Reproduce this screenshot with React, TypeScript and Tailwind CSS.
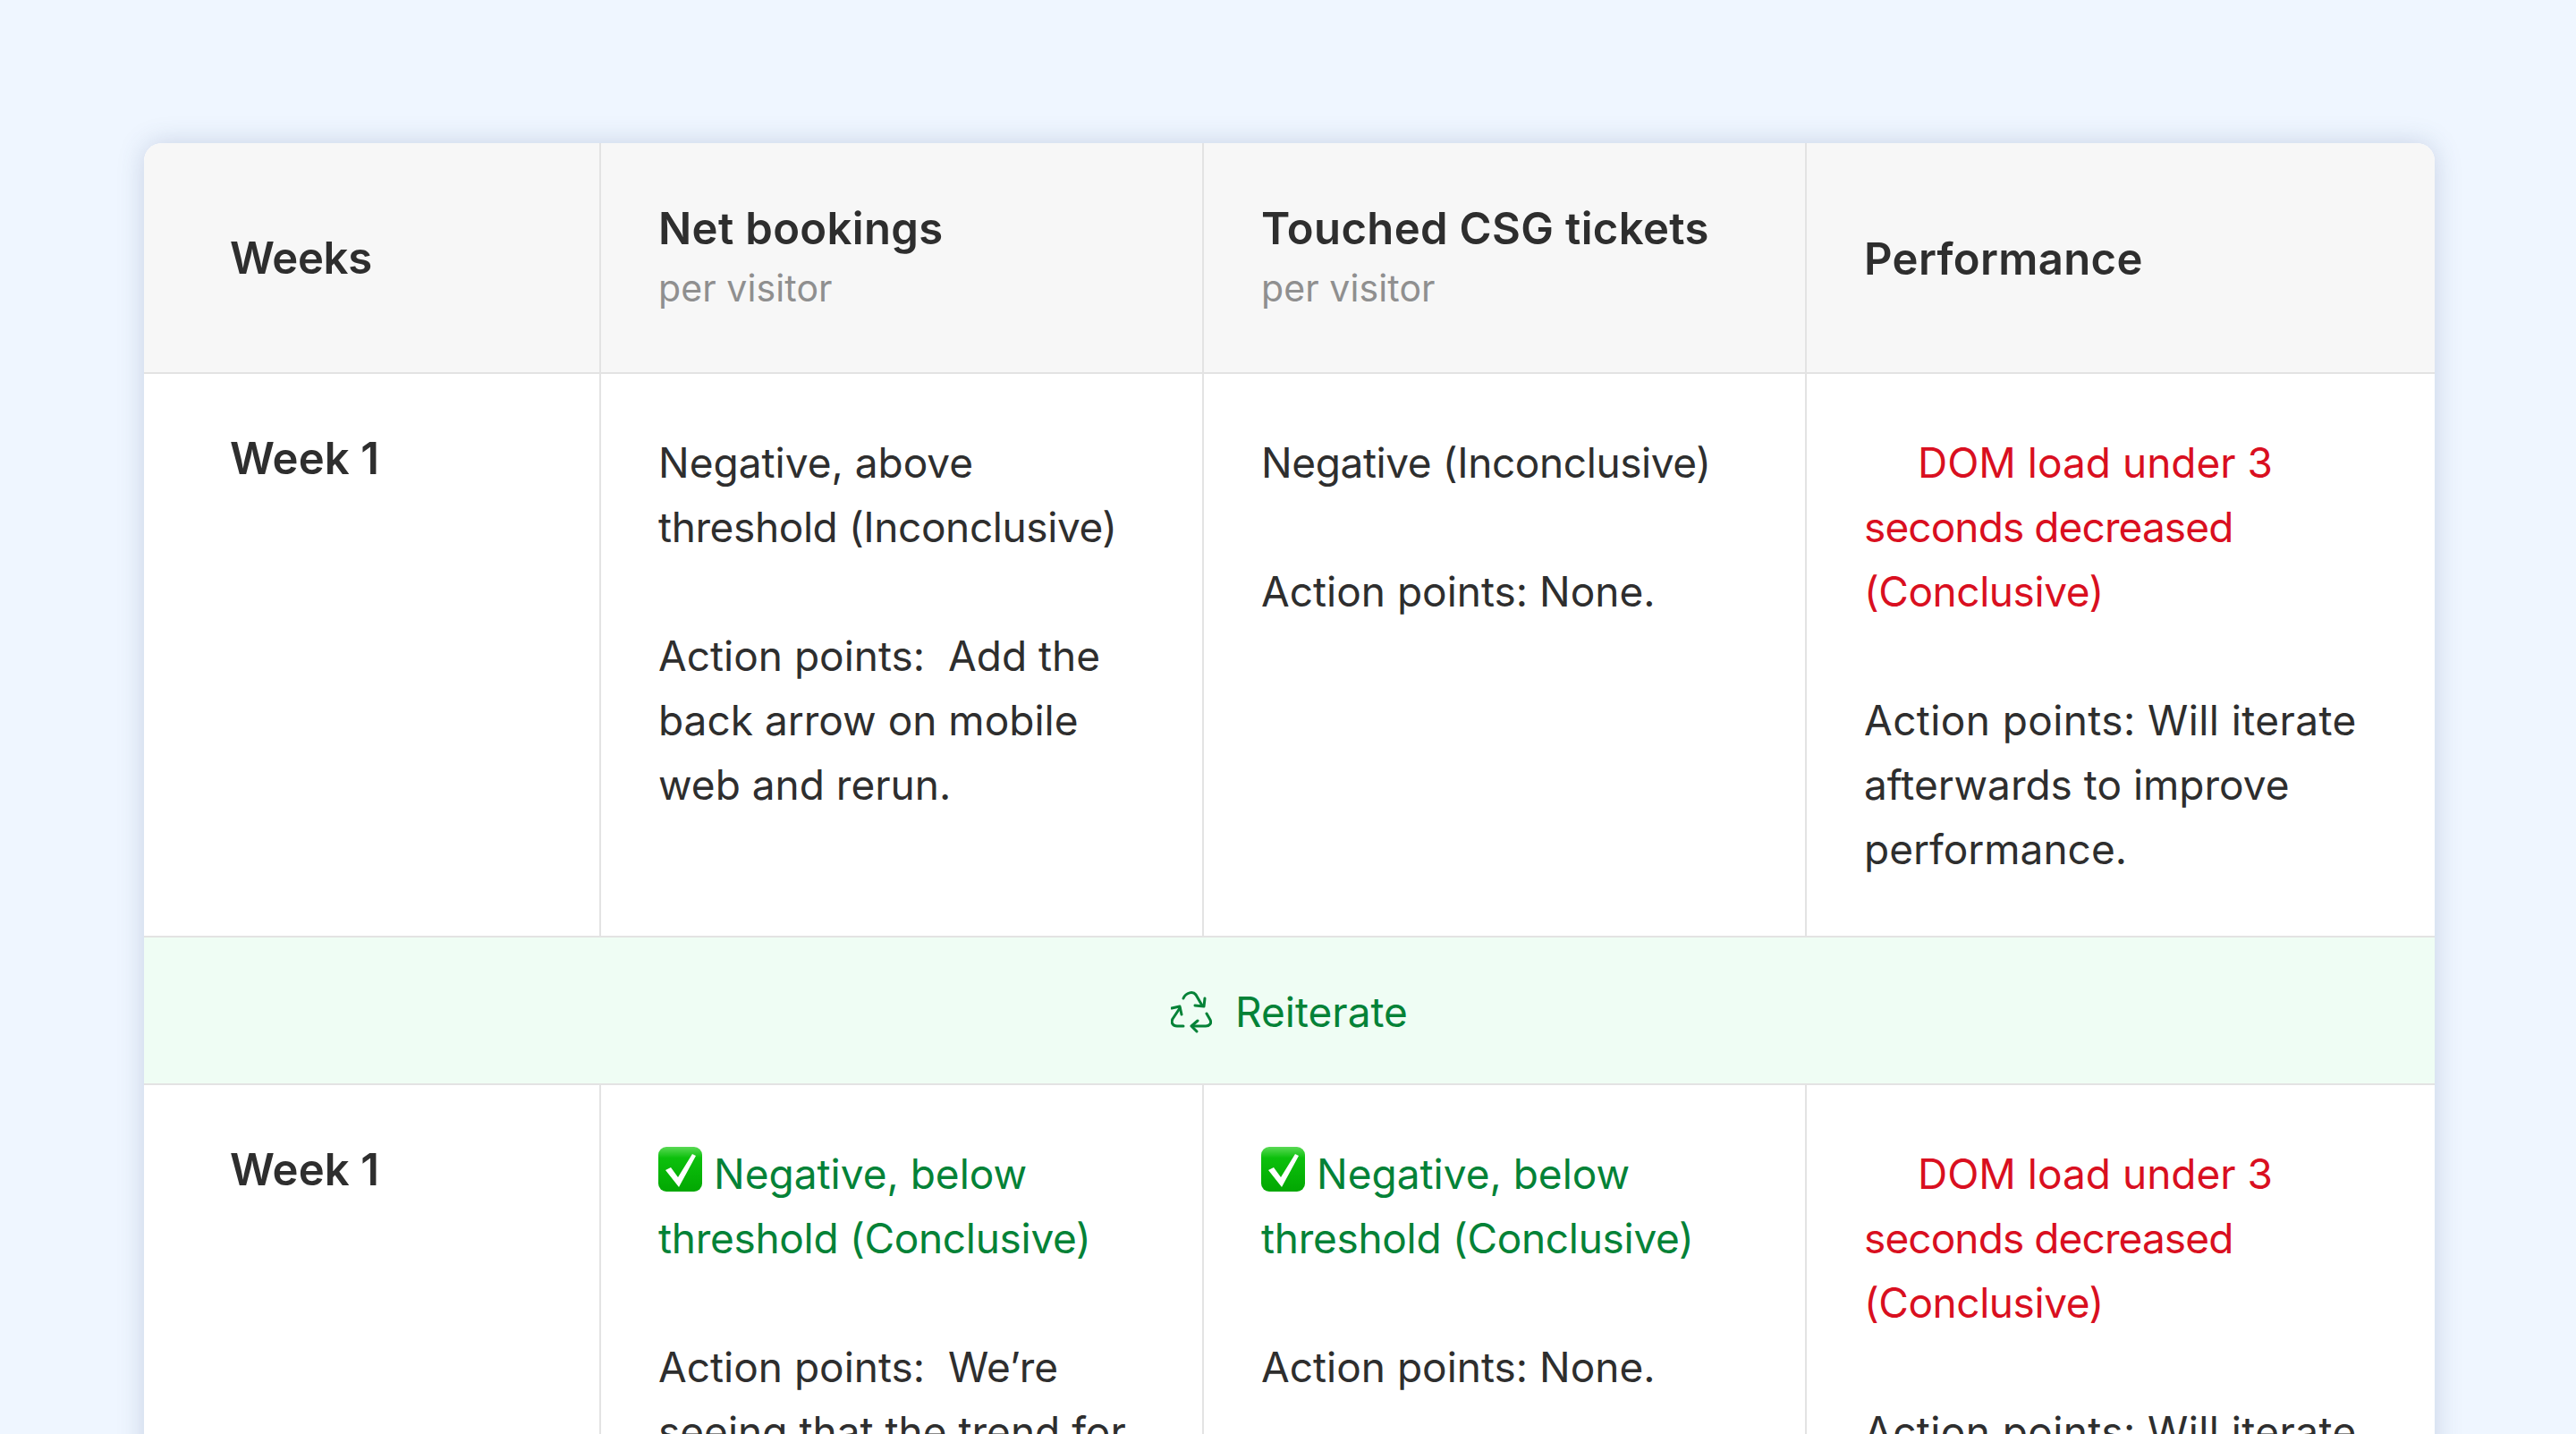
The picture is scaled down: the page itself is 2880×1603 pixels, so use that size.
const cols = "grid grid-cols-[511px_674px_674px_702px]";

function Check() {
  return (
    <svg viewBox="0 0 49 50" className="inline-block w-[49px] h-[50px] align-[-3px] mr-[13px]">
      <defs>
        <linearGradient id="chk" x1="0" y1="0" x2="0" y2="1">
          <stop offset="0" stopColor="#5ad955" />
          <stop offset="0.25" stopColor="#0cc00c" />
          <stop offset="1" stopColor="#02a702" />
        </linearGradient>
      </defs>
      <rect x="0" y="0" width="49" height="50" rx="9" fill="url(#chk)" />
      <path d="M8 26 L14 23 L22 34 L38 8 L42 10 L23 45 Z" fill="#fff" />
    </svg>
  );
}

function RecycleIcon() {
  return (
    <svg viewBox="0 0 46 48" fill="none" stroke="#048237" strokeWidth="3" strokeLinecap="round" strokeLinejoin="round" className="w-[46px] h-[48px]">
      <path d="M14 9C17 2 25 1 28 5L35 17" />
      <path d="M38 9L37 18L27 17" />
      <path d="M14 40L7 40C2 40 0 36 2 32L10 20" />
      <path d="M1 20L10 18L12 27" />
      <path d="M40 26L44 33C46 37 43 40 39 40L24 40" />
      <path d="M30 34L23 40L29 46" />
    </svg>
  );
}

function Head({ title, sub, last }: { title: string; sub?: string; last?: boolean }) {
  return (
    <div className={`flex flex-col justify-center pl-[64px] ${sub ? "" : "pt-[3px]"} ${last ? "" : "border-r-2 border-[#e3e3e3]"}`}>
      <div className="text-[49px] leading-[68px] font-semibold text-[#2e2e2e] tracking-[0.35px]">{title}</div>
      {sub && <div className="text-[41px] leading-[64px] text-[#8f8f8f] tracking-[0.1px]">{sub}</div>}
    </div>
  );
}

function Body({ children, last }: { children: React.ReactNode; last?: boolean }) {
  return (
    <div className={`pl-[64px] pt-[63px] text-[46px] leading-[72px] text-[#2e2e2e] whitespace-nowrap ${last ? "" : "border-r-2 border-[#e3e3e3]"}`}>
      {children}
    </div>
  );
}

function WeekCell() {
  return (
    <div className="pl-[96px] pt-[63px] text-[49px] leading-[64px] font-semibold text-[#2e2e2e] tracking-[0.1px] border-r-2 border-[#e3e3e3]">
      Week 1
    </div>
  );
}

function DomLoad() {
  return (
    <div className="text-[#d90f20]">
      <span className="inline-block w-[60px]" />
      DOM load under 3
      <br />
      <span className="tracking-[-0.9px]">seconds decreased</span>
      <br />
      <span className="tracking-[-0.45px]">(Conclusive)</span>
    </div>
  );
}

function GreenHead() {
  return (
    <div className="text-[#048237]">
      <Check />
      Negative, below
      <br />
      <span className="tracking-[-0.3px]">threshold (Conclusive)</span>
    </div>
  );
}

export default function App() {
  return (
    <div className="h-[1603px] overflow-hidden bg-[#eff6ff] pt-[160px] pl-[161px] font-['Inter',sans-serif]">
      <div className="w-[2561px] h-[1700px] bg-white rounded-[20px] overflow-hidden shadow-[0_0_30px_rgba(60,80,130,0.22)]">
        <div className={`${cols} h-[258px] bg-[#f7f7f7] border-b-2 border-[#e3e3e3]`}>
          <div className="flex items-center pl-[96px] pt-[2px] border-r-2 border-[#e3e3e3] text-[49px] font-semibold text-[#2e2e2e] tracking-[-0.3px]">
            Weeks
          </div>
          <Head title="Net bookings" sub="per visitor" />
          <Head title="Touched CSG tickets" sub="per visitor" />
          <Head title="Performance" last />
        </div>

        <div className={`${cols} h-[630px] border-b-2 border-[#e3e3e3]`}>
          <WeekCell />
          <Body>
            Negative, above
            <br />
            <span className="tracking-[-0.4px]">threshold (Inconclusive)</span>
            <br />
            <br />
            Action points:&nbsp; Add the
            <br />
            back arrow on mobile
            <br />
            web and rerun.
          </Body>
          <Body>
            <span className="tracking-[-0.4px]">Negative (Inconclusive)</span>
            <br />
            <br />
            Action points: None.
          </Body>
          <Body last>
            <DomLoad />
            <br />
            <span className="tracking-[0.4px]">Action points: Will iterate</span>
            <br />
            afterwards to improve
            <br />
            performance.
          </Body>
        </div>

        <div className="flex items-center justify-center gap-[26px] pt-[3px] h-[165px] bg-[#effdf4] border-b-2 border-[#e3e3e3] text-[46px] text-[#048237]">
          <RecycleIcon />
          <span>Reiterate</span>
        </div>

        <div className={`${cols} h-[640px]`}>
          <WeekCell />
          <Body>
            <GreenHead />
            <br />
            Action points:&nbsp; We’re
            <br />
            seeing that the trend for
          </Body>
          <Body>
            <GreenHead />
            <br />
            Action points: None.
          </Body>
          <Body last>
            <DomLoad />
            <br />
            <span className="tracking-[0.4px]">Action points: Will iterate</span>
          </Body>
        </div>
      </div>
    </div>
  );
}
